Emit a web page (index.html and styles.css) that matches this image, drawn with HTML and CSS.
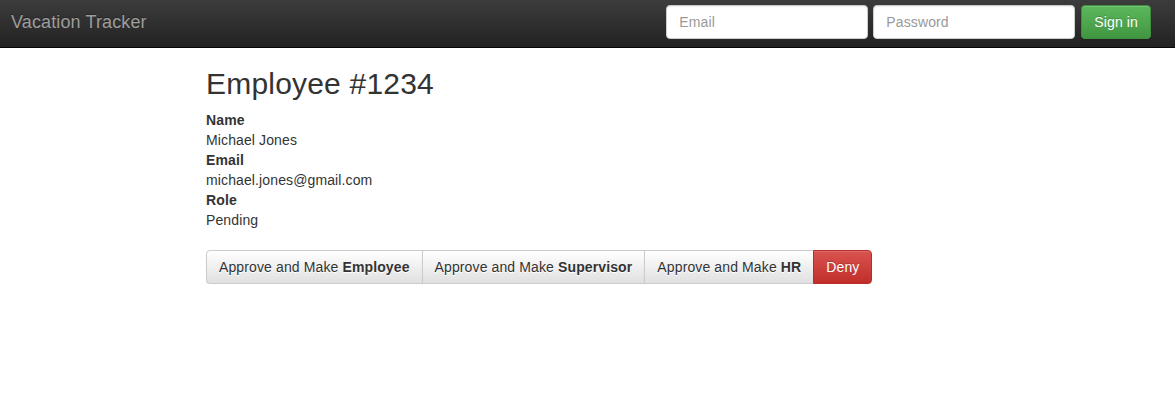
FILE: index.html
```html
<!DOCTYPE html>
<html lang="en">
<head>
<meta charset="utf-8">
<title>Vacation Tracker</title>
<link rel="stylesheet" href="styles.css">
</head>
<body>
<nav class="navbar">
  <a class="brand" href="#">Vacation Tracker</a>
  <form class="signin">
    <input class="field" type="text" placeholder="Email">
    <input class="field" type="password" placeholder="Password">
    <button class="btn btn-success" type="button">Sign in</button>
  </form>
</nav>
<main class="container">
  <h2 class="title">Employee #1234</h2>
  <dl class="details">
    <dt>Name</dt>
    <dd>Michael Jones</dd>
    <dt>Email</dt>
    <dd>michael.jones@gmail.com</dd>
    <dt>Role</dt>
    <dd>Pending</dd>
  </dl>
  <div class="btn-group">
    <button class="btn btn-default" type="button">Approve and Make <b>Employee</b></button>
    <button class="btn btn-default" type="button">Approve and Make <b>Supervisor</b></button>
    <button class="btn btn-default" type="button">Approve and Make <b>HR</b></button>
    <button class="btn btn-danger" type="button">Deny</button>
  </div>
</main>
</body>
</html>
```
FILE: styles.css
```css
* { box-sizing: border-box; }
html, body { margin: 0; padding: 0; }
body {
  font-family: "Liberation Sans", Arial, Helvetica, sans-serif;
  font-size: 14px;
  line-height: 1.42857143;
  letter-spacing: 0.12px;
  color: #333;
  background: #fff;
}
.navbar {
  display: flex;
  align-items: center;
  justify-content: space-between;
  height: 48px;
  padding: 0 24px 3px 11px;
  background-image: linear-gradient(to bottom, #3c3c3c 0, #222 100%);
  border-bottom: 1px solid #080808;
}
.brand {
  font-size: 18px;
  line-height: 20px;
  color: #9d9d9d;
  text-decoration: none;
  text-shadow: 0 -1px 0 rgba(0, 0, 0, .25);
}
.signin {
  display: flex;
  align-items: center;
  gap: 5px;
  margin: 0;
}
.field {
  width: 202px;
  height: 34px;
  padding: 6px 12px;
  font-family: inherit;
  font-size: 14px;
  letter-spacing: inherit;
  color: #555;
  background: #fff;
  border: 1px solid #ccc;
  border-radius: 4px;
  box-shadow: inset 0 1px 1px rgba(0, 0, 0, .075);
}
.field::placeholder { color: #999; }
.signin .btn { margin-left: 1px; min-width: 69px; }
.btn {
  display: inline-block;
  height: 34px;
  padding: 6px 12px;
  font-family: inherit;
  font-size: 14px;
  letter-spacing: inherit;
  line-height: 1.42857143;
  border: 1px solid transparent;
  border-radius: 4px;
  white-space: nowrap;
  cursor: pointer;
  box-shadow: inset 0 1px 0 rgba(255, 255, 255, .15), 0 1px 1px rgba(0, 0, 0, .075);
}
.btn b { font-weight: 700; }
.btn-success {
  color: #fff;
  text-shadow: 0 -1px 0 rgba(0, 0, 0, .2);
  background-image: linear-gradient(to bottom, #5cb85c 0, #419641 100%);
  border-color: #3e8f3e;
}
.btn-default {
  color: #333;
  text-shadow: 0 1px 0 #fff;
  background-image: linear-gradient(to bottom, #fff 0, #e0e0e0 100%);
  border-color: #ccc;
}
.btn-danger {
  color: #fff;
  text-shadow: 0 -1px 0 rgba(0, 0, 0, .2);
  background-image: linear-gradient(to bottom, #d9534f 0, #c12e2a 100%);
  border-color: #b92c28;
}
.container {
  padding: 0 0 0 206px;
}
.title {
  font-size: 30px;
  font-weight: 500;
  line-height: 1.1;
  letter-spacing: 0.2px;
  margin: 19px 0 10px;
  color: #333;
}
.details {
  margin: 0 0 20px;
}
.details dt { font-weight: 700; }
.details dd { margin: 0; }
.btn-group {
  display: inline-flex;
}
.btn-group .btn { border-radius: 0; }
.btn-group .btn + .btn { margin-left: -1px; }
.btn-group .btn:first-child { border-radius: 4px 0 0 4px; }
.btn-group .btn:last-child { border-radius: 0 4px 4px 0; }
```
